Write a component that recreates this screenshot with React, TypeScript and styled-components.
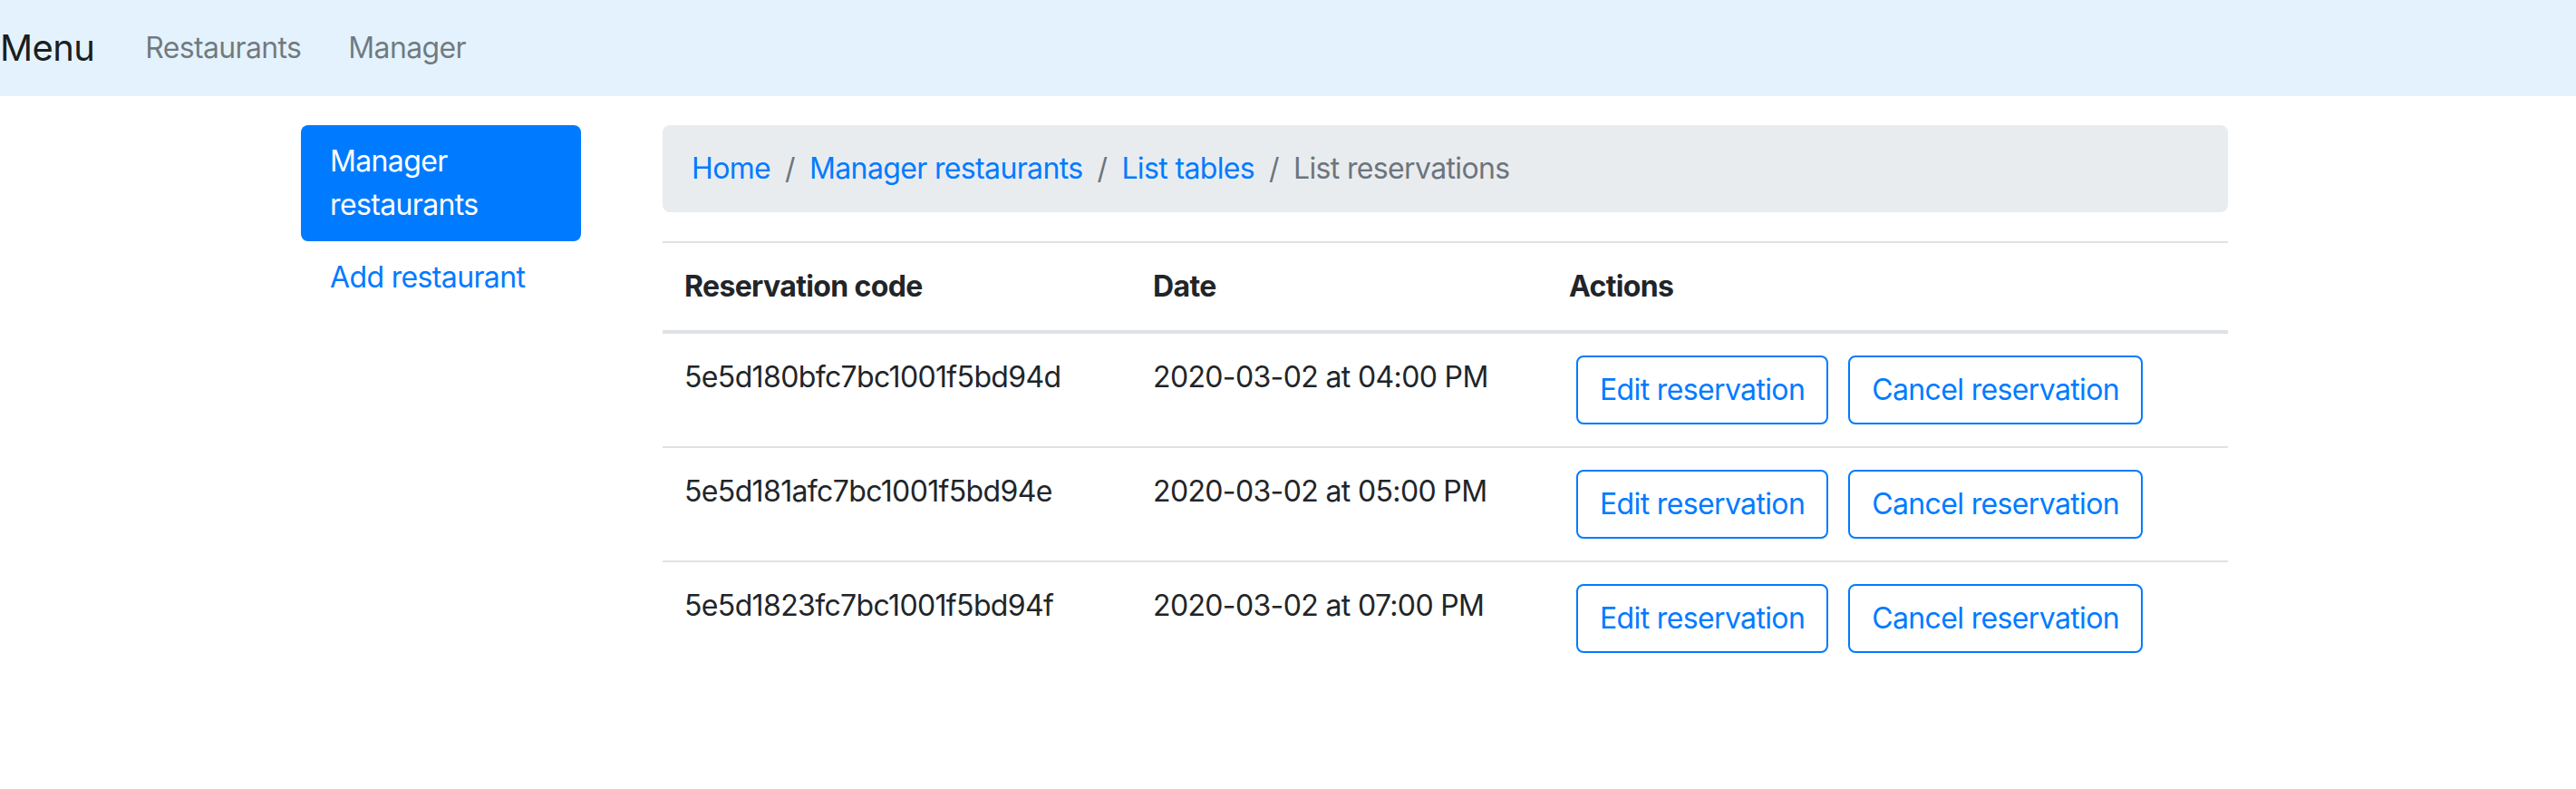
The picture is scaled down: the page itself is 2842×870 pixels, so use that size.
import React from 'react';
import { styled, createGlobalStyle } from 'styled-components';

const GlobalStyle = createGlobalStyle`
  html, body {
    margin: 0;
    padding: 0;
    background: #ffffff;
  }
  body {
    font-family: Inter, "Noto Sans", "Liberation Sans", sans-serif;
    font-size: 32px;
    line-height: 48px;
    letter-spacing: -0.02em;
    color: #212529;
  }
  * {
    box-sizing: border-box;
  }
`;

interface Reservation {
  code: string;
  date: string;
}

const reservations: Reservation[] = [
  { code: '5e5d180bfc7bc1001f5bd94d', date: '2020-03-02 at 04:00 PM' },
  { code: '5e5d181afc7bc1001f5bd94e', date: '2020-03-02 at 05:00 PM' },
  { code: '5e5d1823fc7bc1001f5bd94f', date: '2020-03-02 at 07:00 PM' },
];

const crumbs = ['Home', 'Manager restaurants', 'List tables'];

const App = () => {
  return (
    <>
      <GlobalStyle />
      <Navbar>
        <Brand>Menu</Brand>
        <NavLinks>
          <NavLink>Restaurants</NavLink>
          <NavLink>Manager</NavLink>
        </NavLinks>
      </Navbar>
      <Page>
        <Sidebar>
          <SideItem $active>Manager restaurants</SideItem>
          <SideItem>Add restaurant</SideItem>
        </Sidebar>
        <Main>
          <Breadcrumb>
            {crumbs.map((c) => (
              <Crumb key={c}>
                <CrumbLink>{c}</CrumbLink>
                <Separator>/</Separator>
              </Crumb>
            ))}
            <Crumb $active>List reservations</Crumb>
          </Breadcrumb>
          <Table>
            <colgroup>
              <col style={{ width: 517 }} />
              <col style={{ width: 459 }} />
              <col />
            </colgroup>
            <thead>
              <tr>
                <Th>Reservation code</Th>
                <Th>Date</Th>
                <Th>Actions</Th>
              </tr>
            </thead>
            <tbody>
              {reservations.map((r) => (
                <tr key={r.code}>
                  <Td>{r.code}</Td>
                  <Td>{r.date}</Td>
                  <Td>
                    <Actions>
                      <OutlineButton>Edit reservation</OutlineButton>
                      <OutlineButton>Cancel reservation</OutlineButton>
                    </Actions>
                  </Td>
                </tr>
              ))}
            </tbody>
          </Table>
        </Main>
      </Page>
    </>
  );
};

export default App;

const Navbar = styled.nav`
  display: flex;
  align-items: center;
  height: 106px;
  background-color: #e3f2fd;
`;

const Brand = styled.div`
  font-size: 40px;
  line-height: 60px;
  color: rgba(0, 0, 0, 0.9);
  margin-right: 30px;
`;

const NavLinks = styled.div`
  display: flex;
`;

const NavLink = styled.div`
  padding: 0 26px;
  color: rgba(0, 0, 0, 0.5);
  cursor: pointer;
`;

const Page = styled.div`
  display: flex;
  align-items: flex-start;
  padding: 32px 0 0 332px;
  gap: 90px;
`;

const Sidebar = styled.div`
  width: 309px;
  display: flex;
  flex-direction: column;
`;

const SideItem = styled.div<{ $active?: boolean }>`
  padding: 16px 32px;
  border-radius: 8px;
  color: ${({ $active }) => ($active ? '#ffffff' : '#007bff')};
  background-color: ${({ $active }) => ($active ? '#007bff' : 'transparent')};
  cursor: pointer;
`;

const Main = styled.div`
  width: 1727px;
`;

const Breadcrumb = styled.ol`
  display: flex;
  margin: 0 0 32px 0;
  padding: 24px 32px;
  list-style: none;
  background-color: #e9ecef;
  border-radius: 8px;
`;

const Crumb = styled.li<{ $active?: boolean }>`
  display: flex;
  color: ${({ $active }) => ($active ? '#6c757d' : '#007bff')};
`;

const CrumbLink = styled.span`
  color: #007bff;
  cursor: pointer;
`;

const Separator = styled.span`
  padding: 0 16px;
  color: #6c757d;
`;

const Table = styled.table`
  width: 100%;
  border-collapse: collapse;
  color: #212529;
`;

const Th = styled.th`
  padding: 24px;
  text-align: left;
  font-weight: 700;
  vertical-align: bottom;
  border-top: 2px solid #dee2e6;
  border-bottom: 4px solid #dee2e6;
`;

const Td = styled.td`
  padding: 24px;
  vertical-align: top;
  border-top: 2px solid #dee2e6;
`;

const Actions = styled.div`
  display: flex;
  gap: 22px;
  margin-left: 8px;
`;

const OutlineButton = styled.button`
  font-family: inherit;
  font-size: 32px;
  line-height: 48px;
  letter-spacing: inherit;
  padding: 12px 24px;
  color: #007bff;
  background-color: transparent;
  border: 2px solid #007bff;
  border-radius: 8px;
  cursor: pointer;
`;
